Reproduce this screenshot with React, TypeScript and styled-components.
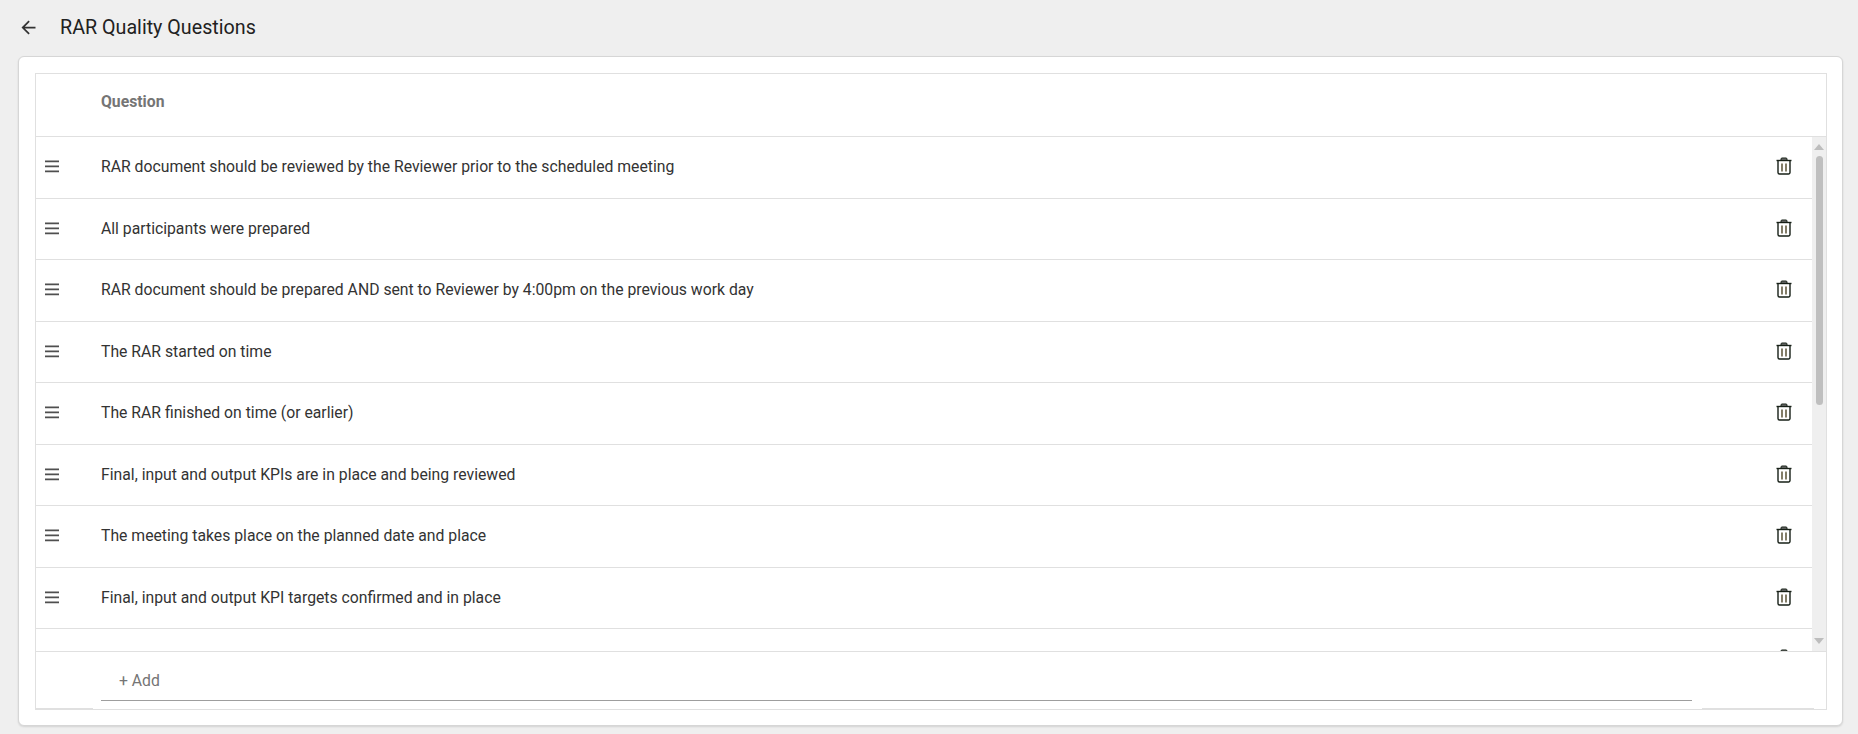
import * as React from "react";
import styled, { createGlobalStyle } from "styled-components";

// last row is scrolled almost out of view, only the top of its bin shows
const questions = [
  "RAR document should be reviewed by the Reviewer prior to the scheduled meeting",
  "All participants were prepared",
  "RAR document should be prepared AND sent to Reviewer by 4:00pm on the previous work day",
  "The RAR started on time",
  "The RAR finished on time (or earlier)",
  "Final, input and output KPIs are in place and being reviewed",
  "The meeting takes place on the planned date and place",
  "Final, input and output KPI targets confirmed and in place",
  "",
];

const Global = createGlobalStyle`
  html, body {
    margin: 0;
    padding: 0;
    height: 100%;
    background: #efefef;
    font-family: Roboto, "Liberation Sans", sans-serif;
    overflow: hidden;
  }
  * { box-sizing: border-box; }
`;

const Page = styled.div`
  height: 734px;
  display: flex;
  flex-direction: column;
  padding: 0 15px 8px 18px;
`;

const TopBar = styled.header`
  height: 56px;
  flex: none;
  display: flex;
  align-items: center;
  gap: 21px;
  padding: 0 0 1px 0;
`;

const Title = styled.h1`
  margin: 0;
  font-size: 19.7px;
  font-weight: 400;
  color: #212121;
`;

const Card = styled.main`
  flex: 1;
  min-height: 0;
  background: #fff;
  border: 1px solid #d6d6d6;
  border-radius: 6px;
  box-shadow: 0 1px 2px rgba(0, 0, 0, 0.12);
  padding: 16px 15px 15px 16px;
  display: flex;
`;

const Table = styled.section`
  flex: 1;
  min-width: 0;
  display: flex;
  flex-direction: column;
  border: 1px solid #e0e0e0;
`;

const HeaderRow = styled.div`
  height: 63px;
  flex: none;
  display: flex;
  align-items: center;
  padding: 0 0 8px 65px;
  border-bottom: 1px solid #e0e0e0;
  font-size: 15.75px;
  font-weight: 700;
  color: #757575;
`;

const Body = styled.div`
  flex: none;
  height: 515px;
  display: flex;
  border-bottom: 1px solid #e0e0e0;
`;

const List = styled.ul`
  flex: 1;
  min-width: 0;
  margin: 0;
  padding: 0;
  list-style: none;
  overflow: hidden;
`;

const Row = styled.li`
  height: 61.5px;
  display: flex;
  align-items: center;
  padding: 0 20px 0 7px;
  border-bottom: 1px solid #e0e0e0;
  font-size: 15.75px;
  color: #333333;
`;

const Handle = styled.span`
  width: 58px;
  flex: none;
  display: flex;
  color: #4f4f4f;
`;

const RowText = styled.span`
  flex: 1;
  padding-bottom: 1px;
`;

const Bin = styled.span`
  display: flex;
  padding-bottom: 2px;
  color: #172017;
`;

const Scrollbar = styled.div`
  width: 14px;
  flex: none;
  background: #efefef;
  display: flex;
  flex-direction: column;
  align-items: center;
  padding: 7px 0;
  gap: 6px;
`;

const Arrow = styled.span<{ $down?: boolean }>`
  flex: none;
  width: 0;
  height: 0;
  border-left: 5px solid transparent;
  border-right: 5px solid transparent;
  ${(p) => (p.$down ? "border-top: 6px solid #bdbdbd;" : "border-bottom: 6px solid #bdbdbd;")}
`;

const ScrollTrack = styled.div`
  flex: 1;
  width: 100%;
  display: flex;
  justify-content: center;
`;

const Thumb = styled.div`
  width: 7px;
  height: 249px;
  border-radius: 4px;
  background: #bfbfbf;
`;

// the darker stubs along the bottom edge sit left and right of the input
const Footer = styled.div`
  position: relative;
  flex: 1;
  min-height: 0;
  padding: 13px 134px 8px 65px;
  display: flex;
  &::before,
  &::after {
    content: "";
    position: absolute;
    bottom: 0;
    height: 1px;
    background: #e0e0e0;
  }
  &::before {
    left: 0;
    width: 57px;
  }
  &::after {
    right: 12px;
    width: 112px;
  }
`;

const AddInput = styled.input`
  width: 100%;
  height: 36px;
  margin: 0;
  padding: 0 0 5px 18px;
  border: 0;
  border-bottom: 1px solid #9e9e9e;
  outline: 0;
  background: transparent;
  font: 400 15.75px Roboto, "Liberation Sans", sans-serif;
  &::placeholder {
    color: #757575;
    opacity: 1;
  }
`;

function BackIcon() {
  return (
    <svg width="21" height="21" viewBox="0 0 24 24" fill="#333333">
      <path d="M20 11H7.83l5.59-5.59L12 4l-8 8 8 8 1.41-1.41L7.83 13H20v-2z" />
    </svg>
  );
}

function MenuIcon() {
  return (
    <svg width="18" height="18" viewBox="0 0 18 18" fill="currentColor">
      <path d="M2 2.4h14v1.8H2zM2 7.4h14v1.8H2zM2 12.4h14v1.8H2z" />
    </svg>
  );
}

function TrashIcon() {
  return (
    <svg width="16" height="18" viewBox="0 0 16 18" fill="none" stroke="currentColor">
      <path d="M5 3.5V2a1 1 0 0 1 1-1h4a1 1 0 0 1 1 1v1.5z" fill="#6f6f6f" />
      <path d="M.5 3.5h15" strokeWidth="1.4" />
      <path d="M2 3.5v12a1.5 1.5 0 0 0 1.5 1.5h9a1.5 1.5 0 0 0 1.5-1.5v-12" strokeWidth="1.4" />
      <path d="M6 6.5v8M10 6.5v8" stroke="#4e4628" strokeWidth="1.4" />
    </svg>
  );
}

export default function App() {
  return (
    <Page>
      <Global />
      <TopBar>
        <BackIcon />
        <Title>RAR Quality Questions</Title>
      </TopBar>
      <Card>
        <Table>
          <HeaderRow>Question</HeaderRow>
          <Body>
            <List>
              {questions.map((q, i) => (
                <Row key={i}>
                  <Handle>
                    <MenuIcon />
                  </Handle>
                  <RowText>{q}</RowText>
                  <Bin>
                    <TrashIcon />
                  </Bin>
                </Row>
              ))}
            </List>
            <Scrollbar>
              <Arrow />
              <ScrollTrack>
                <Thumb />
              </ScrollTrack>
              <Arrow $down />
            </Scrollbar>
          </Body>
          <Footer>
            <AddInput placeholder="+ Add" />
          </Footer>
        </Table>
      </Card>
    </Page>
  );
}
